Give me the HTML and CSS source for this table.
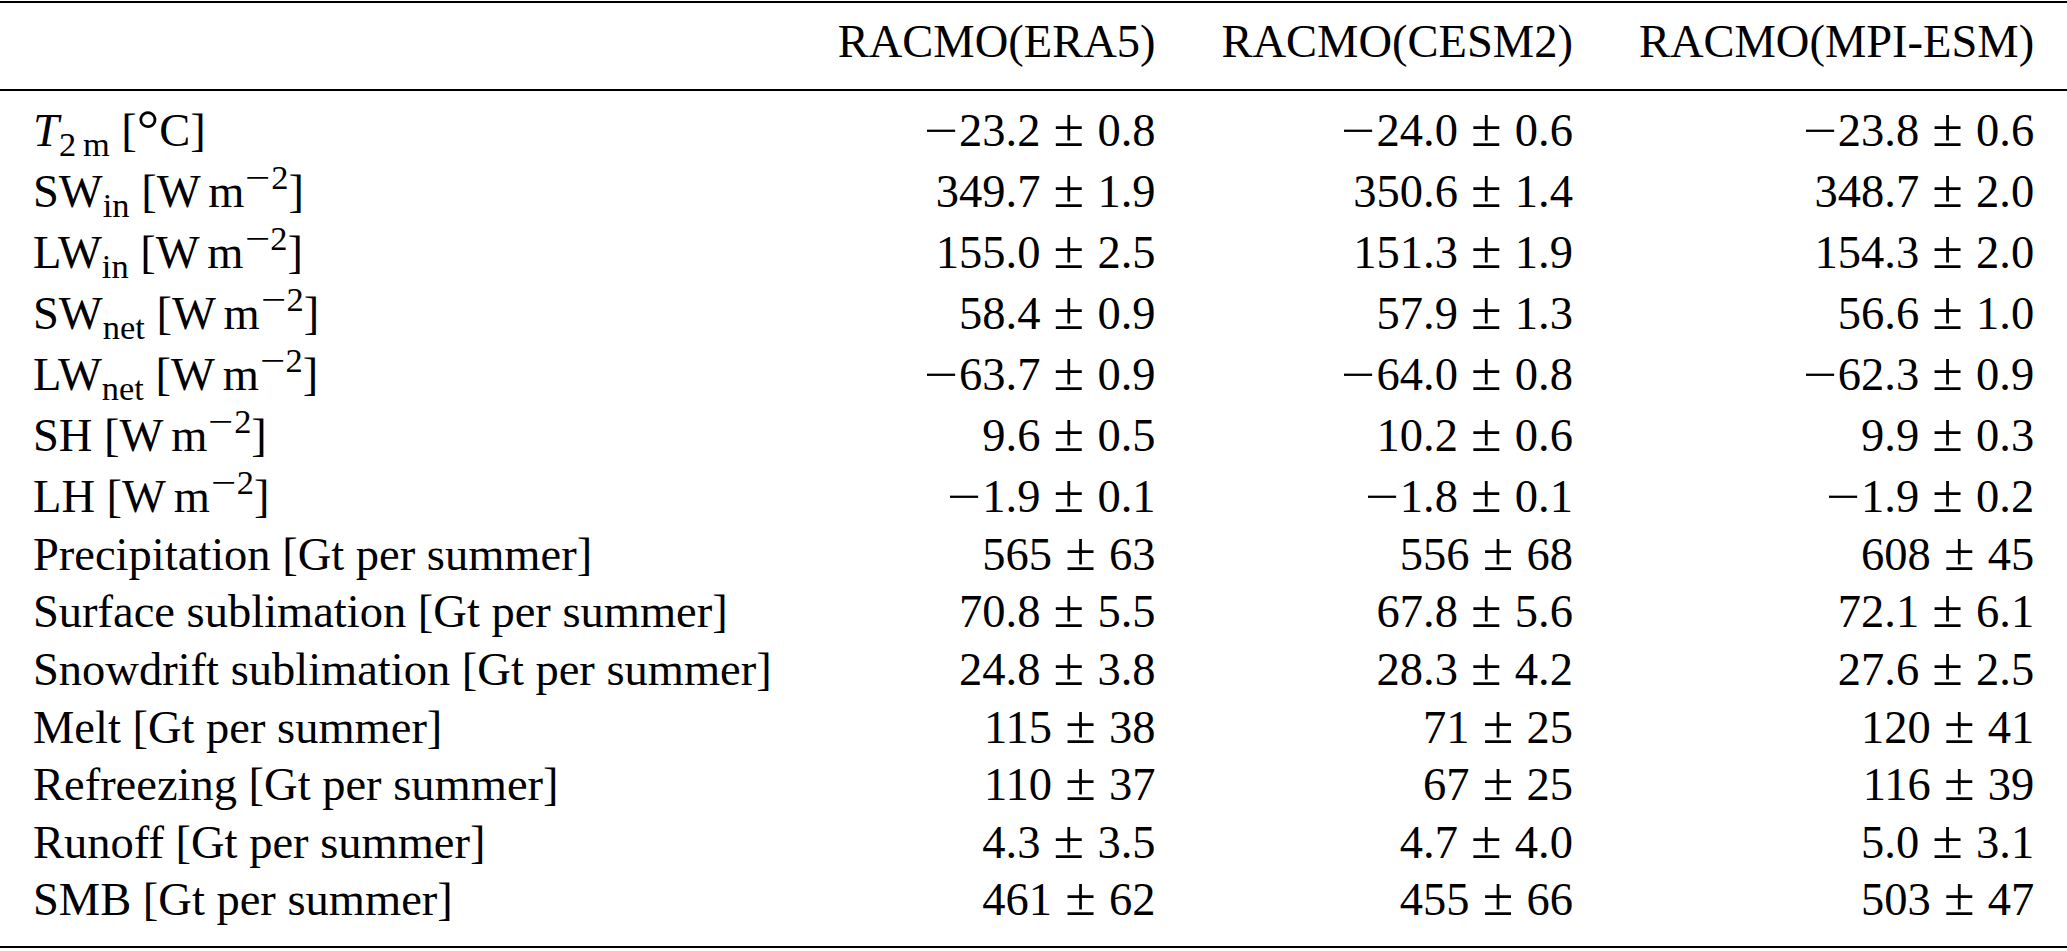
FILE: index.html
```html
<!DOCTYPE html>
<html lang="en">
<head>
<meta charset="utf-8">
<title>RACMO summer statistics</title>
<link rel="stylesheet" href="styles.css">
</head>
<body>
<table class="tbl">
  <thead>
    <tr>
      <th class="lab"></th>
      <th>RACMO(ERA5)</th>
      <th>RACMO(CESM2)</th>
      <th>RACMO(MPI-ESM)</th>
    </tr>
  </thead>
  <tbody>
    <tr>
      <td class="lab"><i>T</i><span class="sb">2<span class="ts"></span>m</span> [<span class="deg">°</span>C]</td>
      <td><span class="mi">−</span>23.2<span class="pm">±</span>0.8</td>
      <td><span class="mi">−</span>24.0<span class="pm">±</span>0.6</td>
      <td><span class="mi">−</span>23.8<span class="pm">±</span>0.6</td>
    </tr>
    <tr class="hs">
      <td class="lab">SW<span class="sb">in</span> [W<span class="ts"></span>m<span class="sp"><span class="mi">−</span>2</span>]</td>
      <td>349.7<span class="pm">±</span>1.9</td>
      <td>350.6<span class="pm">±</span>1.4</td>
      <td>348.7<span class="pm">±</span>2.0</td>
    </tr>
    <tr class="hs">
      <td class="lab">LW<span class="sb">in</span> [W<span class="ts"></span>m<span class="sp"><span class="mi">−</span>2</span>]</td>
      <td>155.0<span class="pm">±</span>2.5</td>
      <td>151.3<span class="pm">±</span>1.9</td>
      <td>154.3<span class="pm">±</span>2.0</td>
    </tr>
    <tr class="hs">
      <td class="lab">SW<span class="sb">net</span> [W<span class="ts"></span>m<span class="sp"><span class="mi">−</span>2</span>]</td>
      <td>58.4<span class="pm">±</span>0.9</td>
      <td>57.9<span class="pm">±</span>1.3</td>
      <td>56.6<span class="pm">±</span>1.0</td>
    </tr>
    <tr class="hs">
      <td class="lab">LW<span class="sb">net</span> [W<span class="ts"></span>m<span class="sp"><span class="mi">−</span>2</span>]</td>
      <td><span class="mi">−</span>63.7<span class="pm">±</span>0.9</td>
      <td><span class="mi">−</span>64.0<span class="pm">±</span>0.8</td>
      <td><span class="mi">−</span>62.3<span class="pm">±</span>0.9</td>
    </tr>
    <tr class="hs">
      <td class="lab">SH [W<span class="ts"></span>m<span class="sp"><span class="mi">−</span>2</span>]</td>
      <td>9.6<span class="pm">±</span>0.5</td>
      <td>10.2<span class="pm">±</span>0.6</td>
      <td>9.9<span class="pm">±</span>0.3</td>
    </tr>
    <tr class="hs">
      <td class="lab">LH [W<span class="ts"></span>m<span class="sp"><span class="mi">−</span>2</span>]</td>
      <td><span class="mi">−</span>1.9<span class="pm">±</span>0.1</td>
      <td><span class="mi">−</span>1.8<span class="pm">±</span>0.1</td>
      <td><span class="mi">−</span>1.9<span class="pm">±</span>0.2</td>
    </tr>
    <tr>
      <td class="lab">Precipitation [Gt per summer]</td>
      <td>565<span class="pm">±</span>63</td>
      <td>556<span class="pm">±</span>68</td>
      <td>608<span class="pm">±</span>45</td>
    </tr>
    <tr>
      <td class="lab">Surface sublimation [Gt per summer]</td>
      <td>70.8<span class="pm">±</span>5.5</td>
      <td>67.8<span class="pm">±</span>5.6</td>
      <td>72.1<span class="pm">±</span>6.1</td>
    </tr>
    <tr>
      <td class="lab">Snowdrift sublimation [Gt per summer]</td>
      <td>24.8<span class="pm">±</span>3.8</td>
      <td>28.3<span class="pm">±</span>4.2</td>
      <td>27.6<span class="pm">±</span>2.5</td>
    </tr>
    <tr>
      <td class="lab">Melt [Gt per summer]</td>
      <td>115<span class="pm">±</span>38</td>
      <td>71<span class="pm">±</span>25</td>
      <td>120<span class="pm">±</span>41</td>
    </tr>
    <tr>
      <td class="lab">Refreezing [Gt per summer]</td>
      <td>110<span class="pm">±</span>37</td>
      <td>67<span class="pm">±</span>25</td>
      <td>116<span class="pm">±</span>39</td>
    </tr>
    <tr>
      <td class="lab">Runoff [Gt per summer]</td>
      <td>4.3<span class="pm">±</span>3.5</td>
      <td>4.7<span class="pm">±</span>4.0</td>
      <td>5.0<span class="pm">±</span>3.1</td>
    </tr>
    <tr>
      <td class="lab">SMB [Gt per summer]</td>
      <td>461<span class="pm">±</span>62</td>
      <td>455<span class="pm">±</span>66</td>
      <td>503<span class="pm">±</span>47</td>
    </tr>
  </tbody>
</table>
</body>
</html>
```
FILE: styles.css
```css
html, body {
  margin: 0;
  padding: 0;
  background: #ffffff;
}

body {
  color: #000000;
  font-family: "Liberation Serif", "Times New Roman", serif;
  font-size: 46.5px;
}

.tbl {
  border-collapse: separate;
  border-spacing: 0;
  margin-top: 1px;
  border-top: 2.3px solid #000;
  border-bottom: 2.3px solid #000;
  white-space: nowrap;
}

.tbl th,
.tbl td {
  padding: 0 33px;
  line-height: 57.6px;
  font-weight: normal;
  text-align: right;
  vertical-align: top;
}

.tbl .lab {
  text-align: left;
}

.tbl thead th {
  padding-top: 10px;
  padding-bottom: 18px;
  border-bottom: 2.3px solid #000;
}

.tbl tbody tr:first-child td {
  padding-top: 11px;
}

.tbl tbody tr.hs td {
  padding-top: 3.5px;
}

.tbl tbody tr:last-child td {
  padding-bottom: 17.5px;
}

.sb {
  font-size: 0.74em;
  vertical-align: -10px;
  line-height: 0;
}

.sp {
  font-size: 0.74em;
  vertical-align: 18px;
  line-height: 0;
}

.deg {
  display: inline-block;
  font-size: 1.2em;
  line-height: 0;
  vertical-align: -2px;
}

.ts {
  display: inline-block;
  width: 0.16667em;
}

.sb .ts {
  width: 0.2em;
}

.mi {
  display: inline-block;
  width: 0.778em;
  text-align: center;
  transform: scaleX(1.3);
}

.pm {
  display: inline-block;
  width: 0.65em;
  margin: 0 0.185em;
  font-size: 1.2em;
  line-height: 0;
  text-align: center;
}
```
